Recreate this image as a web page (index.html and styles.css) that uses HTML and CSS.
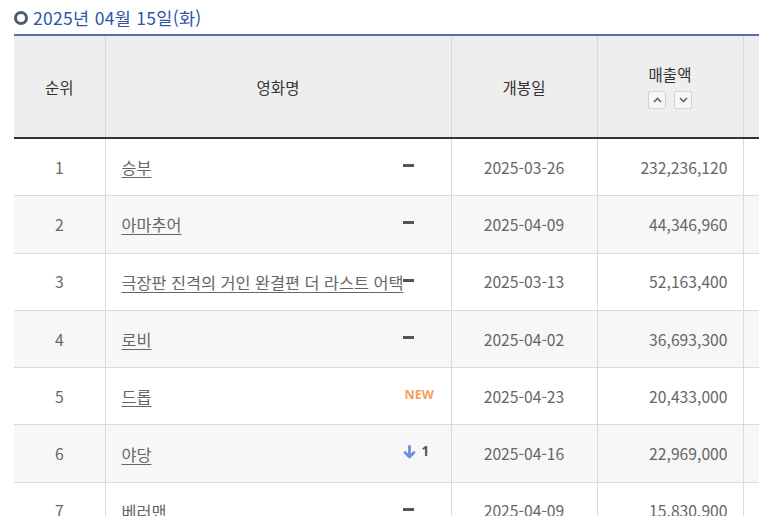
FILE: index.html
```html
<!DOCTYPE html>
<html lang="ko">
<head>
<meta charset="utf-8">
<link rel="stylesheet" href="styles.css">
</head>
<body>
<div class="wrap">
  <h3 class="title"><span class="ring"></span>2025년 04월 15일(화)</h3>
  <table class="board">
    <colgroup>
      <col class="c-rank"><col class="c-name"><col class="c-date"><col class="c-sales"><col class="c-more">
    </colgroup>
    <thead>
      <tr>
        <th>순위</th>
        <th>영화명</th>
        <th>개봉일</th>
        <th class="sort-th">
          <div>매출액</div>
          <div class="sorts">
            <span class="sbtn"><svg width="9" height="6" viewBox="0 0 9 6"><path d="M1 5 L4.5 1.5 L8 5" fill="none" stroke="#666" stroke-width="1.6"/></svg></span>
            <span class="sbtn"><svg width="9" height="6" viewBox="0 0 9 6"><path d="M1 1 L4.5 4.5 L8 1" fill="none" stroke="#666" stroke-width="1.6"/></svg></span>
          </div>
        </th>
        <th></th>
      </tr>
    </thead>
    <tbody>
      <tr><td>1</td><td class="name"><div class="nm"><a>승부</a><span class="st"><span class="dash"></span></span></div></td><td>2025-03-26</td><td class="num">232,236,120</td><td></td></tr>
      <tr><td>2</td><td class="name"><div class="nm"><a>아마추어</a><span class="st"><span class="dash"></span></span></div></td><td>2025-04-09</td><td class="num">44,346,960</td><td></td></tr>
      <tr><td>3</td><td class="name"><div class="nm"><a>극장판 진격의 거인 완결편 더 라스트 어택</a><span class="st"><span class="dash"></span></span></div></td><td>2025-03-13</td><td class="num">52,163,400</td><td></td></tr>
      <tr><td>4</td><td class="name"><div class="nm"><a>로비</a><span class="st"><span class="dash"></span></span></div></td><td>2025-04-02</td><td class="num">36,693,300</td><td></td></tr>
      <tr><td>5</td><td class="name"><div class="nm"><a>드롭</a><span class="st"><span class="new">NEW</span></span></div></td><td>2025-04-23</td><td class="num">20,433,000</td><td></td></tr>
      <tr><td>6</td><td class="name"><div class="nm"><a>야당</a><span class="st"><svg class="down" width="13" height="14" viewBox="0 0 13 14"><path d="M6.5 1.5 V12 M2 7.5 L6.5 12 L11 7.5" fill="none" stroke="#6b8fe0" stroke-width="2.8" stroke-linecap="round" stroke-linejoin="round"/></svg><span class="cnt">1</span></span></div></td><td>2025-04-16</td><td class="num">22,969,000</td><td></td></tr>
      <tr><td>7</td><td class="name"><div class="nm"><a>베러맨</a><span class="st"><span class="dash"></span></span></div></td><td>2025-04-09</td><td class="num">15,830,900</td><td></td></tr>
    </tbody>
  </table>
</div>
</body>
</html>
```
FILE: styles.css
```css
html, body {
  margin: 0;
  padding: 0;
  background: #fff;
  overflow: hidden;
}
body {
  font-family: "Noto Sans CJK KR", "Noto Sans", sans-serif;
  color: #555;
}
.wrap {
  padding: 5px 0 0 14px;
  width: 900px;
}
.title {
  margin: 0;
  display: flex;
  align-items: center;
  font-size: 17.5px;
  font-weight: 400;
  color: #2e55a8;
  height: 25px;
  letter-spacing: 0.3px;
}
.ring {
  width: 8px;
  height: 8px;
  border: 3px solid #4a5a78;
  border-radius: 50%;
  margin-right: 5px;
  flex: none;
}
.board {
  border-collapse: collapse;
  table-layout: fixed;
  width: 880px;
  border-top: 2px solid #5671b3;
  margin-top: 4px;
}
.c-rank { width: 91px; }
.c-name { width: 346px; }
.c-date { width: 146px; }
.c-sales { width: 146px; }
.c-more { width: 151px; }
.board th {
  background: #eeeeee;
  height: 99px;
  font-size: 15.5px;
  font-weight: 400;
  color: #333;
  border-left: 1px solid #d8d8d8;
  border-bottom: 2px solid #333;
  padding: 0;
  vertical-align: middle;
}
.board th:first-child, .board td:first-child { border-left: none; }
.sort-th { padding-bottom: 2px !important; }
.sorts {
  display: flex;
  justify-content: center;
  gap: 8px;
  margin-top: 6px;
}
.sbtn {
  width: 16px;
  height: 16px;
  border: 1px solid #d3d3d3;
  background: #f6f6f6;
  border-radius: 2px;
  display: flex;
  align-items: center;
  justify-content: center;
}
.board td {
  height: 56.3px;
  padding: 0;
  text-align: center;
  font-size: 15.7px;
  color: #666;
  border-left: 1px solid #dadada;
  border-bottom: 1px solid #dadada;
  vertical-align: middle;
}
.board tbody tr:nth-child(even) td { background: #f7f7f7; }
.board td.num {
  text-align: right;
  padding-right: 15px;
}
.board td.name { text-align: left; padding-left: 16px; }
.nm {
  display: flex;
  align-items: center;
}
.nm a {
  flex: 1;
  min-width: 0;
  font-size: 16.3px;
  color: #666;
  text-decoration: underline;
  text-underline-offset: 3px;
  white-space: nowrap;
}
.st {
  width: 48px;
  flex: none;
  display: flex;
  align-items: center;
}
.dash {
  display: block;
  width: 11px;
  height: 3px;
  background: #555;
  margin-bottom: 3px;
}
.new {
  font-family: "Noto Sans", sans-serif;
  font-weight: 700;
  font-size: 12.5px;
  color: #f4a05a;
  margin-left: 2px;
  margin-bottom: 4px;
}
.down { margin-bottom: 3px; }
.cnt {
  font-family: "Noto Sans", sans-serif;
  font-size: 13.5px;
  font-weight: 700;
  color: #555;
  margin-left: 6px;
  margin-bottom: 5px;
}
```
